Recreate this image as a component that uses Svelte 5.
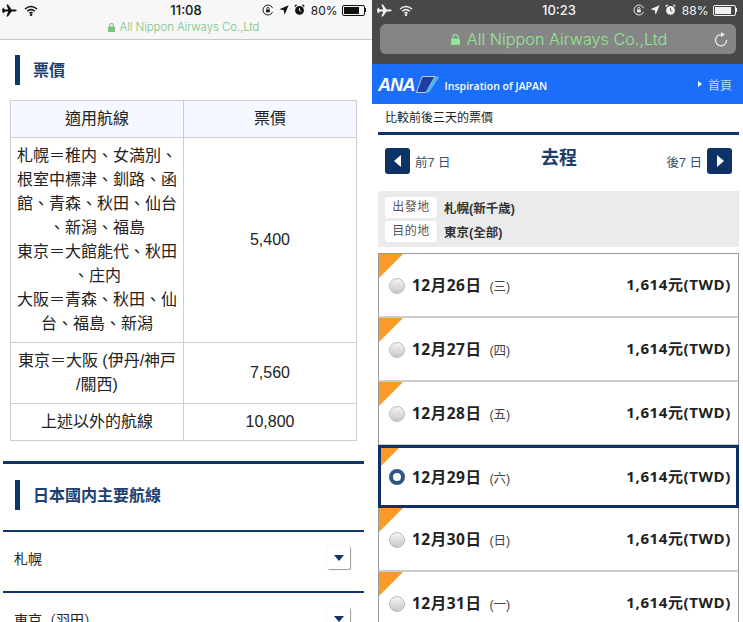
<script lang="ts">
	const days = [
		{ date: '12月26日', wd: '三', on: false },
		{ date: '12月27日', wd: '四', on: false },
		{ date: '12月28日', wd: '五', on: false },
		{ date: '12月29日', wd: '六', on: true },
		{ date: '12月30日', wd: '日', on: false },
		{ date: '12月31日', wd: '一', on: false }
	];
</script>

{#snippet status(time: string, pct: string, level: number)}
	<div class="status">
		<div class="st-left">
			<svg width="15" height="13" viewBox="0 0 15 13"><path fill="currentColor" d="M0 6.5 1 3.6 3 5.6 6.2 5.6 4.4 0.4 6 0.4 9.6 5.6 13 5.6Q14.8 5.8 14.8 6.5T13 7.4L9.6 7.4 6 12.6 4.4 12.6 6.2 7.4 3 7.4 1 9.4Z"/></svg>
			<svg width="14" height="11" viewBox="0 0 14 11" fill="none" stroke="currentColor" stroke-width="1.5"><path d="M1 4Q7 -1 13 4"/><path d="M3.2 6.2Q7 3 10.8 6.2"/><path d="M5.4 8.2Q7 7 8.6 8.2"/><circle cx="7" cy="9.8" r=".5"/></svg>
		</div>
		<div class="st-time">{time}</div>
		<div class="st-right">
			<svg width="12" height="12" viewBox="0 0 13 13" fill="none" stroke="currentColor"><path d="M11.5 8.5A5.4 5.4 0 1 1 11.5 4.5"/><rect x="4.4" y="6" width="4" height="3" fill="currentColor" stroke="none"/><path d="M5.2 6V4.8a1.2 1.2 0 0 1 2.4 0V6" stroke-width=".9"/></svg>
			<svg width="10" height="10" viewBox="0 0 11 11"><path fill="currentColor" d="M10.6.4 6.2 10.6 5.2 5.8.4 4.8Z"/></svg>
			<svg width="11" height="12" viewBox="0 0 12 13"><circle cx="6" cy="7" r="4.8" fill="currentColor"/><path d="M6 4.2V7.2L8 8" fill="none" stroke="var(--st-bg)" stroke-width="1"/><path d="M.8 2.6 2.8.8M11.2 2.6 9.2.8" stroke="currentColor" stroke-width="1.4"/></svg>
			<span class="pct">{pct}</span>
			<span class="batt"><span class="fill" style="width:{level}%"></span></span><span class="nub"></span>
		</div>
	</div>
{/snippet}

{#snippet tri(dir: string)}
	<button class="pager" aria-label="page">
		<svg width="8" height="12" viewBox="0 0 8 12"><path fill="#fff" d={dir === 'l' ? 'M7 0V12L0 6Z' : 'M1 0V12L8 6Z'}/></svg>
	</button>
{/snippet}

<div class="screens">
	<section class="left">
		<header class="l-top">
			{@render status('11:08', '80%', 80)}
			<div class="l-url">
				<svg width="7" height="9" viewBox="0 0 7 9"><rect y="3.4" width="7" height="5.6" rx=".8" fill="#7ac47f"/><path d="M1.6 3.6V2.4a1.9 1.9 0 0 1 3.8 0V3.6" fill="none" stroke="#7ac47f" stroke-width="1.1"/></svg>
				<span>All Nippon Airways Co.,Ltd</span>
			</div>
		</header>

		<h2 class="head first">票價</h2>

		<table>
			<thead>
				<tr><th class="c1">適用航線</th><th>票價</th></tr>
			</thead>
			<tbody>
				<tr>
					<td class="c1">札幌＝稚内、女満別、根室中標津、釧路、函館、青森、秋田、仙台、新潟、福島<br />東京＝大館能代、秋田、庄内<br />大阪＝青森、秋田、仙台、福島、新潟</td>
					<td>5,400</td>
				</tr>
				<tr>
					<td class="c1">東京＝大阪 (伊丹/神戸/關西)</td>
					<td>7,560</td>
				</tr>
				<tr>
					<td class="c1">上述以外的航線</td>
					<td>10,800</td>
				</tr>
			</tbody>
		</table>

		<div class="rule thick"></div>
		<h2 class="head">日本國内主要航線</h2>

		<div class="route">
			<span>札幌</span>
			<span class="drop"><i></i></span>
		</div>
		<div class="route">
			<span>東京（羽田）</span>
			<span class="drop"><i></i></span>
		</div>
	</section>

	<section class="right">
		<header class="r-top">
			{@render status('10:23', '88%', 88)}
			<div class="r-url">
				<svg class="lock" width="9" height="11" viewBox="0 0 9 11"><rect y="4.4" width="9" height="6.6" rx="1" fill="#93e793"/><path d="M2 4.6V3a2.5 2.5 0 0 1 5 0V4.6" fill="none" stroke="#93e793" stroke-width="1.3"/></svg>
				<span>All Nippon Airways Co.,Ltd</span>
				<svg class="reload" width="14" height="15" viewBox="0 0 14 15" fill="none"><path d="M7.5 2.6A5.6 5.6 0 1 0 12.6 8" stroke="#e8e8e8" stroke-width="1.3"/><path d="M7 0 11 2.6 7 5.2Z" fill="#e8e8e8"/></svg>
			</div>
		</header>

		<div class="brand">
			<span class="ana">ANA</span>
			<svg class="stripes" width="24" height="17" viewBox="0 0 24 17"><path d="M6 .5H19L10 16.5H.5Z" fill="#1f3f9e" stroke="#fff" stroke-width=".7"/><path d="M19.5.5H23.5L13 16.5H10.5Z" fill="#4fb8ee"/></svg>
			<span class="tag">Inspiration of JAPAN</span>
			<span class="home"><i></i>首頁</span>
		</div>

		<div class="compare">比較前後三天的票價</div>

		<div class="wrap">
			<div class="pagebar">
				<div class="side">{@render tri('l')}<span>前7 日</span></div>
				<div class="title">去程</div>
				<div class="side"><span>後7 日</span>{@render tri('r')}</div>
			</div>

			<dl class="od">
				<div><dt>出發地</dt><dd>札幌(新千歲)</dd></div>
				<div><dt>目的地</dt><dd>東京(全部)</dd></div>
			</dl>

			<ul class="days">
				{#each days as d}
					<li class:on={d.on}>
						<span class="radio"></span>
						<span class="date">{d.date}</span>
						<span class="wd">({d.wd})</span>
						<span class="price">1,614元(TWD)</span>
					</li>
				{/each}
			</ul>
		</div>
	</section>
</div>

<style>
	:global(body) {
		margin: 0;
		background: #fff;
	}
	.screens {
		display: flex;
		width: 743px;
		height: 622px;
		overflow: hidden;
		font-family: 'Liberation Sans', 'Noto Sans CJK TC', sans-serif;
		color: #222;
	}
	.left {
		width: 372px;
		flex: none;
		overflow: hidden;
	}
	.right {
		width: 371px;
		flex: none;
		overflow: hidden;
	}

	.status {
		display: grid;
		grid-template-columns: 1fr auto 1fr;
		align-items: center;
		height: 20px;
		font-size: 13px;
		--st-bg: #f7f7f7;
	}
	.st-left {
		display: flex;
		align-items: center;
		gap: 7px;
		padding-left: 2px;
	}
	.st-time {
		font-weight: 500;
		font-family: 'Inter', sans-serif;
		font-size: 13px;
	}
	.st-right {
		display: flex;
		align-items: center;
		justify-content: flex-end;
		gap: 5px;
		padding-right: 6px;
	}
	.pct {
		margin-left: 1px;
		margin-right: -1px;
		font-family: 'Inter', sans-serif;
		font-size: 12px;
	}
	.batt {
		display: block;
		width: 19px;
		height: 7px;
		border: 1px solid currentColor;
		border-radius: 2px;
		padding: 1px;
		box-sizing: content-box;
	}
	.fill {
		display: block;
		height: 100%;
		background: currentColor;
	}
	.nub {
		width: 1.5px;
		height: 4px;
		background: currentColor;
		margin-left: -5px;
	}

	.l-top {
		height: 39px;
		background: #f7f7f7;
		border-bottom: 1px solid #c8c8c8;
		color: #111;
	}
	.l-url {
		display: flex;
		align-items: center;
		justify-content: center;
		gap: 5px;
		margin-top: -1px;
		height: 16px;
		font-size: 11.5px;
		color: #7ac47f;
		padding-right: 5px;
		font-family: 'Inter', sans-serif;
		font-weight: 300;
		letter-spacing: -0.1px;
	}

	.head {
		margin: 15px 0 15px 15px;
		padding-left: 13px;
		height: 30px;
		line-height: 31px;
		border-left: 5px solid #0d3769;
		font-size: 16px;
		font-weight: 700;
		color: #1c4170;
	}
	.head:not(.first) {
		margin-top: 16px;
		margin-bottom: 20px;
	}

	table {
		width: 347px;
		margin-left: 10px;
		border-collapse: collapse;
		table-layout: fixed;
		font-size: 16px;
		line-height: 24px;
		line-break: anywhere;
	}
	th,
	td {
		border: 1px solid #ccd0d6;
		text-align: center;
		padding: 6px 6px;
		font-weight: 400;
		color: #222;
	}
	th {
		background: #f5f9ff;
		height: 24px;
	}
	.c1 {
		width: 160px;
	}

	.rule {
		margin: 20px 8px 0 3px;
	}
	.thick {
		height: 3px;
		background: #0d3769;
		width: 361px;
	}

	.route {
		display: flex;
		align-items: center;
		justify-content: space-between;
		width: 361px;
		margin-left: 3px;
		border-top: 2px solid #0d3769;
		padding: 0 14px 8px 11px;
		box-sizing: border-box;
		height: 61px;
		font-size: 14px;
	}
	.drop {
		display: flex;
		align-items: center;
		justify-content: center;
		width: 23px;
		height: 23px;
		background: #fff;
		border-radius: 2px;
		box-shadow: 1px 1px 1px #9a9a9a, 0 0 1px #bbb;
	}
	.drop i {
		width: 0;
		height: 0;
		border-left: 5px solid transparent;
		border-right: 5px solid transparent;
		border-top: 6px solid #0d3769;
	}

	.r-top {
		height: 64px;
		background: #484848;
		color: #f2f2f2;
	}
	.r-top .status {
		--st-bg: #484848;
		padding-left: 3px;
	}
	.r-url {
		display: flex;
		align-items: center;
		justify-content: center;
		gap: 7px;
		position: relative;
		margin: 4px 7px 0 8px;
		height: 30px;
		background: #858585;
		border-radius: 6px;
		font-size: 16.2px;
		color: #93e793;
		padding-right: 4px;
		font-family: 'Inter', sans-serif;
		font-weight: 300;
	}
	.reload {
		position: absolute;
		right: 8px;
		top: 8px;
	}
	.lock {
		margin-left: 6px;
	}

	.brand {
		display: flex;
		align-items: center;
		height: 40px;
		background: #1a6efa;
		color: #fff;
		padding-left: 6px;
		padding-right: 11px;
	}
	.ana {
		font: italic 700 18px 'Liberation Sans', sans-serif;
		letter-spacing: -0.8px;
		margin-top: 2px;
	}
	.stripes {
		margin: 0 0 0 1px;
	}
	.tag {
		margin-left: 5px;
		font-size: 10.5px;
		font-family: 'Open Sans', sans-serif;
		font-weight: 600;
		margin-top: 3px;
	}
	.home {
		margin-left: auto;
		display: flex;
		align-items: center;
		gap: 6px;
		font-size: 12px;
		font-weight: 300;
	}
	.home i {
		width: 0;
		height: 0;
		border-top: 3.5px solid transparent;
		border-bottom: 3.5px solid transparent;
		border-left: 4px solid #fff;
	}

	.compare {
		height: 28px;
		line-height: 28px;
		padding-left: 13px;
		font-size: 12px;
		color: #222;
	}

	.wrap {
		margin: 0 4px 0 6px;
		border-top: 3px solid #0d3769;
	}
	.pagebar {
		display: flex;
		align-items: center;
		justify-content: space-between;
		height: 52px;
		margin-bottom: 4px;
		padding: 0 7px;
		position: relative;
	}
	.side {
		display: flex;
		align-items: center;
		gap: 5px;
		font-size: 12.5px;
		color: #33516f;
	}
	.pager {
		display: flex;
		align-items: center;
		justify-content: center;
		width: 25px;
		height: 26px;
		padding: 0;
		border: none;
		border-radius: 3px;
		background: #0d3366;
	}
	.title {
		font-size: 18px;
		font-weight: 700;
		color: #1c3c6a;
		margin: -11px 0 0 1px;
	}

	.od {
		margin: 0;
		background: #ebebeb;
		height: 56px;
		padding: 6px 7px 0;
		box-sizing: border-box;
		display: flex;
		flex-direction: column;
		gap: 3px;
	}
	.od div {
		display: flex;
		align-items: center;
	}
	.od dt {
		width: 52px;
		height: 21px;
		line-height: 21px;
		text-align: center;
		background: #fff;
		border-radius: 3px;
		font-size: 12px;
		color: #555;
		letter-spacing: 0.5px;
	}
	.od dd {
		margin: 0 0 0 7px;
		font-size: 12.5px;
		font-weight: 600;
		color: #333;
	}

	.days {
		list-style: none;
		margin: 6px 0 0;
		padding: 0;
		border-top: 1px solid #999;
	}
	.days li {
		position: relative;
		display: flex;
		align-items: center;
		border: 1px solid #999;
		border-width: 0 1px;
		border-bottom: 2px solid #ccc;
		box-sizing: content-box;
		height: 62px;
		padding-left: 10px;
		padding-right: 7px;
	}
	.days li::before {
		content: '';
		position: absolute;
		left: 0;
		top: 0;
		width: 0;
		height: 0;
		border-top: 24px solid #fb9a28;
		border-right: 24px solid transparent;
	}
	.days li.on {
		border: 3px solid #0d3366;
		height: 57px;
		margin-top: -1px;
		padding-left: 8px;
		padding-right: 5px;
		z-index: 1;
	}
	.days li.on::before {
		border-top-width: 18px;
		border-right-width: 18px;
	}
	.radio {
		flex: none;
		box-sizing: border-box;
		width: 16px;
		height: 16px;
		border-radius: 50%;
		border: 1px solid #bbb;
		background: linear-gradient(#f4f4f4, #c8c8c8);
		margin-top: 1px;
	}
	li.on .radio {
		border: 4px solid #2f5583;
		background: #fff;
	}
	.date {
		margin-left: 7px;
		font-size: 15.5px;
		letter-spacing: 0.5px;
		font-weight: 700;
		color: #222;
		font-family: 'Open Sans', 'Noto Sans CJK TC', sans-serif;
		margin-top: -1px;
	}
	.wd {
		margin-left: 8px;
		font-size: 12.5px;
		color: #444;
		margin-top: 1px;
	}
	.price {
		margin-left: auto;
		margin-top: -3px;
		font-size: 15px;
		letter-spacing: 0.6px;
		font-weight: 700;
		color: #222;
		font-family: 'Open Sans', 'Noto Sans CJK TC', sans-serif;
	}
</style>
